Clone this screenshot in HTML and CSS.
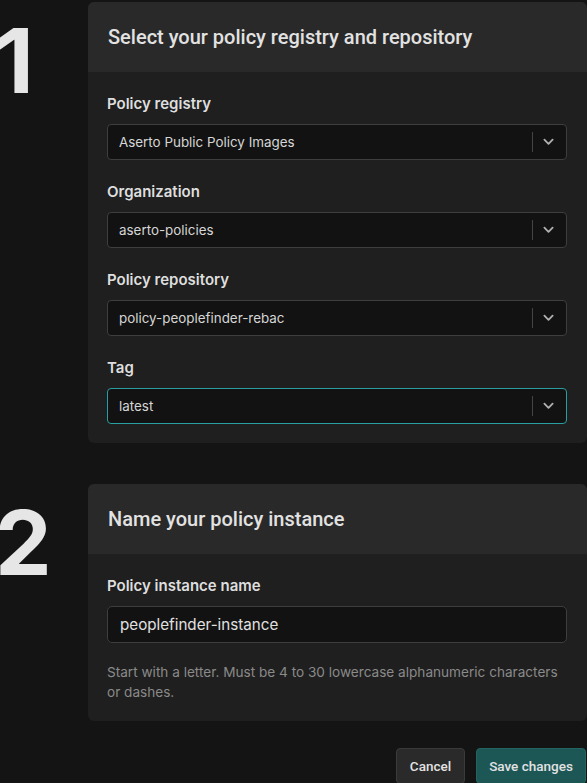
FILE: index.html
```html
<!DOCTYPE html>
<html lang="en">
<head>
<meta charset="utf-8">
<title>Policy instance</title>
<link rel="stylesheet" href="styles.css">
</head>
<body>
<div class="page">
  <section class="step">
    <div class="step-num">1</div>
    <div class="card">
      <div class="card-head">Select your policy registry and repository</div>
      <div class="card-body">
        <div class="field">
          <label class="label">Policy registry</label>
          <div class="select">
            <span class="select-value">Aserto Public Policy Images</span>
            <span class="sep"></span>
            <svg class="chev" viewBox="0 0 12 8" width="12" height="8"><path d="M1.5 1.5 L6 6 L10.5 1.5" fill="none" stroke="currentColor" stroke-width="2" stroke-linecap="round" stroke-linejoin="round"/></svg>
          </div>
        </div>
        <div class="field">
          <label class="label">Organization</label>
          <div class="select">
            <span class="select-value">aserto-policies</span>
            <span class="sep"></span>
            <svg class="chev" viewBox="0 0 12 8" width="12" height="8"><path d="M1.5 1.5 L6 6 L10.5 1.5" fill="none" stroke="currentColor" stroke-width="2" stroke-linecap="round" stroke-linejoin="round"/></svg>
          </div>
        </div>
        <div class="field">
          <label class="label">Policy repository</label>
          <div class="select">
            <span class="select-value">policy-peoplefinder-rebac</span>
            <span class="sep"></span>
            <svg class="chev" viewBox="0 0 12 8" width="12" height="8"><path d="M1.5 1.5 L6 6 L10.5 1.5" fill="none" stroke="currentColor" stroke-width="2" stroke-linecap="round" stroke-linejoin="round"/></svg>
          </div>
        </div>
        <div class="field">
          <label class="label">Tag</label>
          <div class="select focused">
            <span class="select-value">latest</span>
            <span class="sep"></span>
            <svg class="chev" viewBox="0 0 12 8" width="12" height="8"><path d="M1.5 1.5 L6 6 L10.5 1.5" fill="none" stroke="currentColor" stroke-width="2" stroke-linecap="round" stroke-linejoin="round"/></svg>
          </div>
        </div>
      </div>
    </div>
  </section>

  <section class="step step2">
    <div class="step-num">2</div>
    <div class="card">
      <div class="card-head">Name your policy instance</div>
      <div class="card-body body2">
        <div class="field">
          <label class="label">Policy instance name</label>
          <div class="input">peoplefinder-instance</div>
        </div>
        <p class="help">Start with a letter. Must be 4 to 30 lowercase alphanumeric characters or dashes.</p>
      </div>
    </div>
  </section>

  <div class="actions">
    <button class="btn btn-cancel">Cancel</button>
    <button class="btn btn-save">Save changes</button>
  </div>
</div>
</body>
</html>
```

FILE: styles.css
```css
html, body {
  margin: 0;
  padding: 0;
  background: #141414;
  overflow: hidden;
}
body {
  font-family: Inter, "Noto Sans", sans-serif;
  color: #e2e2e2;
}
.page {
  padding-top: 2px;
  display: flex;
  flex-direction: column;
}
.step {
  display: flex;
  align-items: flex-start;
}
.step2 {
  margin-top: 41px;
}
.step-num {
  width: 88px;
  flex: none;
  font-family: Inter, sans-serif;
  font-weight: 700;
  font-size: 90px;
  line-height: 1;
  color: #e6e6e6;
  margin-top: 14px;
  text-indent: -5px;
}
.card {
  flex: 1;
  background: #1f1f1f;
  border-radius: 6px;
  overflow: hidden;
}
.card-head {
  height: 70px;
  background: #292929;
  display: flex;
  align-items: center;
  padding-left: 20px;
  font-family: Roboto, sans-serif;
  font-weight: 500;
  font-size: 20px;
  color: #e2e2e2;
}
.card-body {
  padding: 22px 20px 19px 19px;
  display: flex;
  flex-direction: column;
  gap: 22px;
}
.field {
  display: flex;
  flex-direction: column;
  gap: 10px;
}
.label {
  font-size: 15px;
  font-weight: 600;
  line-height: 20px;
  color: #dedede;
}
.select {
  height: 36px;
  box-sizing: border-box;
  border: 1px solid #3e3e3e;
  border-radius: 4px;
  background: #121212;
  display: flex;
  align-items: center;
  padding-left: 11px;
  padding-right: 12px;
}
.select.focused {
  border-color: #2a9ea0;
}
.select-value {
  flex: 1;
  font-size: 13.4px;
  color: #d6d6d6;
}
.sep {
  width: 1px;
  height: 20px;
  background: #444;
  margin-right: 10px;
}
.chev {
  color: #b0b0b0;
  width: 11px;
  height: 8px;
}
.body2 {
  gap: 19px;
}
.input {
  height: 37px;
  box-sizing: border-box;
  border: 1px solid #3e3e3e;
  border-radius: 5px;
  background: #121212;
  display: flex;
  align-items: center;
  padding-left: 12px;
  font-size: 15.2px;
  color: #e0e0e0;
}
.help {
  margin: 0;
  font-size: 13.6px;
  line-height: 20px;
  color: #8a8a8a;
}
.actions {
  display: flex;
  justify-content: flex-end;
  gap: 11px;
  margin-top: 27px;
  padding-right: 1px;
}
.btn {
  height: 36px;
  border-radius: 4px;
  font-family: Roboto, sans-serif;
  font-weight: 500;
  font-size: 13.5px;
  color: #e2e2e2;
  border: 1px solid transparent;
  padding: 0 10px;
}
.btn-cancel {
  width: 69px;
  background: #2a2a2a;
  border-color: #3a3a3a;
}
.btn-save {
  width: 110px;
  background: #1c5756;
  border-color: #236463;
}
```
